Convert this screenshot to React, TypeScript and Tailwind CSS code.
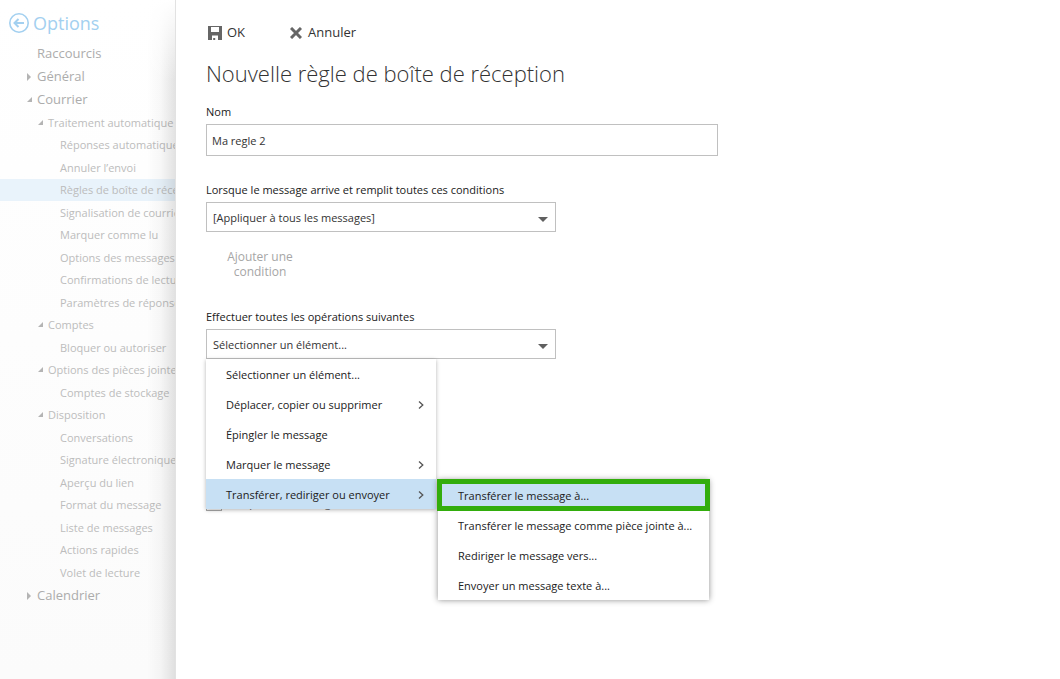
import { useState } from 'react'

interface NavItem {
  label: string
  level: 1 | 2 | 3
  open?: boolean
  active?: boolean
}

interface MenuItem {
  label: string
  sub?: boolean
  active?: boolean
  outlined?: boolean
}

const TOP_ITEMS: NavItem[] = [
  { label: 'Raccourcis', level: 1 },
  { label: 'Général', level: 1, open: false },
  { label: 'Courrier', level: 1, open: true },
]

const MAIL_ITEMS: NavItem[] = [
  { label: 'Traitement automatique', level: 2, open: true },
  { label: 'Réponses automatiques', level: 3 },
  { label: 'Annuler l’envoi', level: 3 },
  { label: 'Règles de boîte de réception', level: 3, active: true },
  { label: 'Signalisation de courrier', level: 3 },
  { label: 'Marquer comme lu', level: 3 },
  { label: 'Options des messages', level: 3 },
  { label: 'Confirmations de lecture', level: 3 },
  { label: 'Paramètres de réponse', level: 3 },
  { label: 'Comptes', level: 2, open: true },
  { label: 'Bloquer ou autoriser', level: 3 },
  { label: 'Options des pièces jointes', level: 2, open: true },
  { label: 'Comptes de stockage', level: 3 },
  { label: 'Disposition', level: 2, open: true },
  { label: 'Conversations', level: 3 },
  { label: 'Signature électronique', level: 3 },
  { label: 'Aperçu du lien', level: 3 },
  { label: 'Format du message', level: 3 },
  { label: 'Liste de messages', level: 3 },
  { label: 'Actions rapides', level: 3 },
  { label: 'Volet de lecture', level: 3 },
]

const ACTIONS: MenuItem[] = [
  { label: 'Sélectionner un élément...' },
  { label: 'Déplacer, copier ou supprimer', sub: true },
  { label: 'Épingler le message' },
  { label: 'Marquer le message', sub: true },
  { label: 'Transférer, rediriger ou envoyer', sub: true, active: true },
]

const FORWARD_ACTIONS: MenuItem[] = [
  { label: 'Transférer le message à...', active: true, outlined: true },
  { label: 'Transférer le message comme pièce jointe à...' },
  { label: 'Rediriger le message vers...' },
  { label: 'Envoyer un message texte à...' },
]

const selectCls =
  'block h-[30px] w-full appearance-none border border-[#c0c0c0] bg-white pl-1.5 pr-8 pt-0.5 text-[11px] text-[#333] focus:outline-none'

function TreeArrow({ open }: { open?: boolean }) {
  return (
    <svg className="h-2 w-2 shrink-0" viewBox="0 0 8 8" fill="#b4b4b4">
      {open === true && <path d="M6 1v5H1z" />}
      {open === false && <path d="M1 0l4 4-4 4z" />}
    </svg>
  )
}

function NavRow({ item }: { item: NavItem }) {
  const cls = {
    1: 'h-[23px] pl-[26px] gap-[3px] text-[13px] text-[#acacac] font-medium',
    2: 'h-[22px] pl-[37px] gap-[3px] text-[11px] text-[#bcbcbc]',
    3: 'h-[22px] pl-[60px] text-[11px] text-[#bcbcbc]',
  }[item.level]

  return (
    <a href="#" className={`flex items-center whitespace-nowrap ${cls} ${item.active ? 'bg-[#e9f3fb]' : ''}`}>
      {item.level < 3 && <TreeArrow open={item.open} />}
      {item.label}
    </a>
  )
}

function SelectArrow() {
  return (
    <svg className="pointer-events-none absolute right-2 top-[15px] h-[5px] w-[10px]" viewBox="0 0 10 5" fill="#606060">
      <path d="M0 0h10L5 5z" />
    </svg>
  )
}

function MenuRow({ item }: { item: MenuItem }) {
  return (
    <button
      type="button"
      role="menuitem"
      className={[
        'flex h-[30px] w-full items-center justify-between whitespace-nowrap pl-5 pr-3 pt-0.5 text-left',
        item.active ? 'bg-[#c7e0f4]' : 'bg-white',
        item.outlined ? 'outline-[5px] -outline-offset-4 outline-[#32ad0c]' : '',
      ].join(' ')}
    >
      {item.label}
      {item.sub && (
        <svg className="h-2 w-1.5 shrink-0" viewBox="0 0 6 8" fill="none" stroke="#555" strokeWidth="1.3">
          <path d="M1 .5L4.8 4 1 7.5" />
        </svg>
      )}
    </button>
  )
}

export default function App() {
  const [name, setName] = useState('Ma regle 2')

  return (
    <div className="flex min-h-screen bg-white font-['Open_Sans','Noto_Sans',sans-serif] text-[11px] text-[#212121]">

      {/* Sidebar */}
      <nav className="relative w-44 shrink-0 overflow-hidden border-r border-[#e2e2e2] bg-gradient-to-b from-white to-[#fbfbfb]">
        <a href="#" className="flex h-[42px] items-center gap-[3px] pl-2 pt-1 text-lg text-[#a3d0f0]">
          <svg className="h-[22px] w-[22px]" viewBox="0 0 22 22" fill="none" stroke="currentColor">
            <circle cx="11" cy="11" r="9.2" strokeWidth="1.6" />
            <path d="M16 11H7M10.5 7L6.5 11l4 4" strokeWidth="2" />
          </svg>
          Options
        </a>
        <ul>
          {TOP_ITEMS.map(item => <li key={item.label}><NavRow item={item} /></li>)}
        </ul>
        <ul className="mt-px">
          {MAIL_ITEMS.map(item => <li key={item.label} className="even:pb-px"><NavRow item={item} /></li>)}
        </ul>
        <NavRow item={{ label: 'Calendrier', level: 1, open: false }} />
        <div className="pointer-events-none absolute inset-y-0 right-0 w-7 bg-gradient-to-r from-black/0 via-black/3 to-black/11" />
        <div className="pointer-events-none absolute right-0 top-0 h-20 w-7 bg-gradient-to-b from-white to-white/0" />
      </nav>

      {/* Rule form */}
      <main className="min-w-0 flex-1 pl-[30px] pr-4 pt-5">
        <div className="flex h-6 items-center gap-[45px] pt-px text-[13px] text-[#333]">
          <button type="button" className="flex items-center gap-[5px] pl-0.5">
            <svg className="h-[14px] w-[14px]" viewBox="0 0 14 14" fill="#666">
              <path fillRule="evenodd" d="M0 0h14v14H0zM3 1v5h8V1zM4 9.5V14h1.2v-2h2v2H10V9.5z" />
            </svg>
            OK
          </button>
          <button type="button" className="flex items-center gap-1.5">
            <svg className="h-3 w-3" viewBox="0 0 12 12" stroke="#666" strokeWidth="3">
              <path d="M1 1l10 10M11 1L1 11" />
            </svg>
            Annuler
          </button>
        </div>

        <h1 className="mt-[13px] text-[22px] font-light leading-8 text-[#333]">Nouvelle règle de boîte de réception</h1>

        <label htmlFor="name" className="mt-[15px] block leading-4">Nom</label>
        <input
          id="name"
          type="text"
          value={name}
          onChange={e => setName(e.target.value)}
          className="mt-1 block h-8 w-full max-w-[512px] border border-[#c0c0c0] px-[5px] text-[#333] focus:outline-none"
        />

        <label htmlFor="condition" className="mt-[26px] block leading-4">
          Lorsque le message arrive et remplit toutes ces conditions
        </label>
        <div className="relative mt-1 max-w-[350px]">
          <select id="condition" className={selectCls}>
            <option>[Appliquer à tous les messages]</option>
          </select>
          <SelectArrow />
        </div>
        <button type="button" disabled className="ml-3 mt-[17px] block w-[84px] text-center text-xs leading-[15px] text-[#a6a6a6]">
          Ajouter une condition
        </button>

        <label htmlFor="action" className="mt-[30px] block leading-4">
          Effectuer toutes les opérations suivantes
        </label>
        <div className="relative mt-1 max-w-[350px]">
          <select id="action" className={selectCls}>
            <option>Sélectionner un élément...</option>
          </select>
          <SelectArrow />

          {/* Action menu, opened over the rest of the form */}
          <div role="menu" className="absolute left-0 top-full z-10 w-[230px]">
            <div className="bg-white shadow-[0_1px_4px_rgba(0,0,0,0.3)]">
              {ACTIONS.map(item => <MenuRow key={item.label} item={item} />)}
            </div>
            <div role="menu" className="absolute left-full top-[121px] ml-[2px] w-[271px] bg-white shadow-[0_0_6px_rgba(0,0,0,0.45)]">
              {FORWARD_ACTIONS.map(item => <MenuRow key={item.label} item={item} />)}
            </div>
          </div>
        </div>

        <label className="mt-[136px] flex h-4 items-center gap-1 text-[#666]">
          <input type="checkbox" className="h-4 w-4 appearance-none border border-[#aaa] bg-white" />
          Excepté si le message
        </label>
      </main>
    </div>
  )
}
